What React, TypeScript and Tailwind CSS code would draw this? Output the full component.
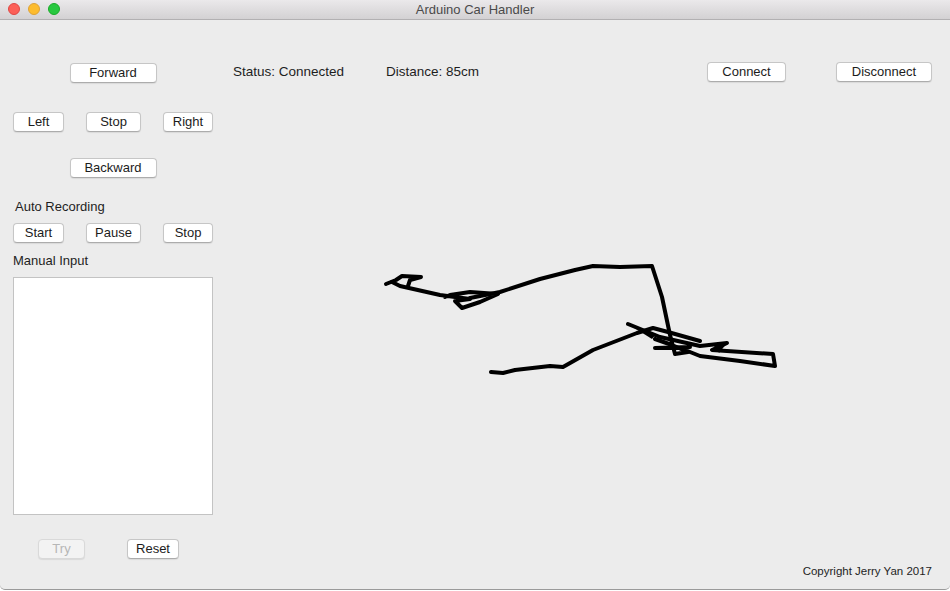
import type { ReactNode } from "react"

function Btn({ children, className = "", disabled = false }: { children: ReactNode; className?: string; disabled?: boolean }) {
  return (
    <button
      disabled={disabled}
      className={
        "h-[20px] flex items-center justify-center rounded-[4px] border text-[13px] leading-[18px] shadow-[0_1px_1px_rgba(0,0,0,0.08)] " +
        (disabled
          ? "border-[#d9d9d9] bg-[#f3f3f3] text-[#b6b6b6] "
          : "border-[#c6c6c6] border-b-[#acacac] bg-white text-[#1c1c1c] ") +
        className
      }
    >
      {children}
    </button>
  )
}

function Track() {
  return (
    <svg width="737" height="480" viewBox="213 81 737 480" className="block">
      <g fill="none" stroke="#000" strokeWidth="4" strokeLinejoin="round" strokeLinecap="round">
        {/* little arrow at the start */}
        <polyline points="386,283 396,279 402,275 421,276 410,279 408,285" />
        {/* left section */}
        <polyline points="392,281 400,285 440,294 470,298 455,300 462,307 480,301 498,293 470,291 450,294 445,296" />
        {/* up and across the top */}
        <polyline points="470,297 500,291 540,278 575,269 593,265 620,266 652,265 662,296 670,334 675,353 688,351 672,344 655,338" />
        <polyline points="628,323 660,336 700,345 727,342 712,349 773,353 775,365 740,360 700,355 680,347 655,347 690,346" />
        {/* bottom section */}
        <polyline points="491,371 503,372 515,369 550,365 563,366 593,349 637,332 653,327 668,331 700,340" />
      </g>
      <path d="M628,323 L656,333 L652,338 Z" fill="#000" />
      <path d="M716,345 L727,342 L719,352 Z" fill="#000" />
    </svg>
  )
}

export default function App() {
  return (
    <div className="w-[950px] h-[591px] bg-white font-['Liberation_Sans',Arial,sans-serif]">
      <div className="w-[950px] h-[590px] flex flex-col bg-[#ececec] border-b border-[#9a9a9a] rounded-b-[5px] overflow-hidden">
        {/* Title bar */}
        <div className="relative h-[20px] shrink-0 flex items-center justify-center bg-gradient-to-b from-[#ebe9eb] to-[#d3d1d3] border-b border-[#b2b0b2]">
          <div className="absolute left-[8px] top-[3px] flex gap-[8px]">
            <span className="w-[12px] h-[12px] rounded-full bg-[#fc5f57] border border-[#df4744]" />
            <span className="w-[12px] h-[12px] rounded-full bg-[#fdbc2e] border border-[#dea236]" />
            <span className="w-[12px] h-[12px] rounded-full bg-[#28c840] border border-[#1aab29]" />
          </div>
          <span className="text-[13px] leading-[16px] text-[#4a4a4a]">Arduino Car Handler</span>
        </div>

        <div className="flex flex-1">
          {/* Left controls */}
          <div className="w-[200px] ml-[13px] flex flex-col pt-[43px]">
            <Btn className="w-[87px] self-center">Forward</Btn>
            <div className="mt-[29px] flex justify-between">
              <Btn className="w-[51px]">Left</Btn>
              <Btn className="w-[55px]">Stop</Btn>
              <Btn className="w-[50px]">Right</Btn>
            </div>
            <Btn className="w-[87px] self-center mt-[26px]">Backward</Btn>
            <div className="mt-[21px] pl-[2px] text-[13px] leading-[16px] text-[#1e1e1e]">Auto Recording</div>
            <div className="mt-[8px] flex justify-between">
              <Btn className="w-[51px]">Start</Btn>
              <Btn className="w-[55px]">Pause</Btn>
              <Btn className="w-[50px]">Stop</Btn>
            </div>
            <div className="mt-[10px] text-[13px] leading-[16px] text-[#1e1e1e]">Manual Input</div>
            <div className="mt-[8px] h-[238px] bg-white border border-[#c3c3c3]" />
            <div className="mt-[24px] flex gap-[42px] pl-[25px]">
              <Btn disabled className="w-[47px]">Try</Btn>
              <Btn className="w-[52px]">Reset</Btn>
            </div>
          </div>

          {/* Right area */}
          <div className="flex-1 flex flex-col">
            <div className="mt-[42px] h-[20px] flex items-center text-[13.5px] text-[#1e1e1e]">
              <span className="ml-[20px] w-[153px]">Status: Connected</span>
              <span>Distance: 85cm</span>
              <Btn className="w-[79px] ml-auto">Connect</Btn>
              <Btn className="w-[96px] ml-[50px] mr-[18px]">Disconnect</Btn>
            </div>
            <Track />
            <div className="mt-[2px] pr-[18px] text-right text-[11.5px] leading-[14px] text-[#1e1e1e]">
              Copyright Jerry Yan 2017
            </div>
          </div>
        </div>
      </div>
    </div>
  )
}
